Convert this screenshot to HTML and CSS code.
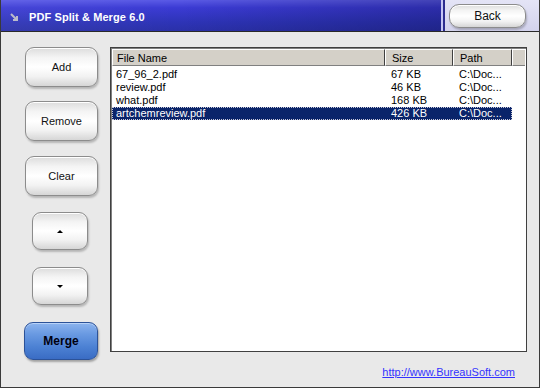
FILE: index.html
```html
<!DOCTYPE html>
<html lang="en">
<head>
    <meta charset="UTF-8">
    <title>PDF Split &amp; Merge 6.0</title>
    <link rel="stylesheet" href="styles.css">
</head>
<body>
    <div class="window">
        <div class="titlebar">
            <div class="caption">
                <svg class="app-icon" width="9" height="9" viewBox="0 0 9 9">
                    <path d="M1 1 L7 7 M7 3 L7 7 L3 7" stroke="#b8b8c8" stroke-width="2" fill="none"/>
                </svg>
                <span class="caption-text">PDF Split &amp; Merge 6.0</span>
            </div>
            <div class="back-area">
                <button class="btn back-btn">Back</button>
            </div>
        </div>

        <div class="main">
            <div class="sidebar">
                <button class="btn side-btn">Add</button>
                <button class="btn side-btn">Remove</button>
                <button class="btn side-btn">Clear</button>
                <button class="btn arrow-btn btn-up"><span class="tri-up"></span></button>
                <button class="btn arrow-btn btn-down"><span class="tri-down"></span></button>
                <button class="btn merge-btn">Merge</button>
            </div>

            <div class="filelist">
                <div class="list-head">
                    <div class="col col-name">File Name</div>
                    <div class="col col-size">Size</div>
                    <div class="col col-path">Path</div>
                    <div class="col col-rest"></div>
                </div>
                <div class="list-body">
                    <div class="row">
                        <div class="cell col-name">67_96_2.pdf</div>
                        <div class="cell col-size">67 KB</div>
                        <div class="cell col-path">C:\Doc...</div>
                    </div>
                    <div class="row">
                        <div class="cell col-name">review.pdf</div>
                        <div class="cell col-size">46 KB</div>
                        <div class="cell col-path">C:\Doc...</div>
                    </div>
                    <div class="row">
                        <div class="cell col-name">what.pdf</div>
                        <div class="cell col-size">168 KB</div>
                        <div class="cell col-path">C:\Doc...</div>
                    </div>
                    <div class="row selected">
                        <div class="cell col-name">artchemreview.pdf</div>
                        <div class="cell col-size">426 KB</div>
                        <div class="cell col-path">C:\Doc...</div>
                    </div>
                </div>
            </div>
        </div>

        <div class="footer">
            <a href="#" class="site-link">http://www.BureauSoft.com</a>
        </div>
    </div>
</body>
</html>
```

FILE: styles.css
```css
/* Ventana principal */
body {
    margin: 0;
    font-family: "Liberation Sans", Arial, sans-serif;
    background-color: #e9e9e9;
}

.window {
    width: 540px;
    height: 388px;
    box-sizing: border-box;
    background-color: #e9e9e9;
    border-left: 1px solid #3a3a3a;
    border-right: 1px solid #3a3a3a;
    border-bottom: 1px solid #3a3a3a;
    display: flex;
    flex-direction: column;
}

/* Barra de título */
.titlebar {
    display: flex;
    height: 31px;
    border-bottom: 1px solid #2a2a2a;
}

.caption {
    flex: 1;
    display: flex;
    align-items: center;
    padding-left: 9px;
    padding-top: 3px;
    background: linear-gradient(180deg, #5a5ae6 0%, #3b3bd4 25%, #2e34b8 70%, #2a30a8 100%);
    position: relative;
}

.caption::after {
    content: "";
    position: absolute;
    inset: 0;
    background: linear-gradient(90deg, rgba(255, 255, 255, 0.05) 0%, rgba(0, 0, 0, 0) 40%, rgba(0, 0, 40, 0.25) 100%);
}

.app-icon {
    margin-right: 10px;
}

.caption-text {
    color: #ffffff;
    font-weight: bold;
    font-size: 11px;
    letter-spacing: 0.1px;
}

.back-area {
    width: 90px;
    border-left: 2px solid #c4c4f4;
    box-shadow: inset 2px 0 0 #2c2c90;
    background: linear-gradient(180deg, #e4e4f6, #d2d2ec);
    display: flex;
    align-items: center;
    padding-left: 6px;
    padding-top: 1px;
}

/* Botones */
.btn {
    font-family: "Liberation Sans", Arial, sans-serif;
    font-size: 11px;
    color: #111;
    border: 1px solid #8c8c8c;
    border-radius: 9px;
    background: linear-gradient(180deg, #dcdcdc 0%, #f4f4f4 25%, #ffffff 50%, #f2f2f2 75%, #d6d6d6 100%);
    box-shadow: 1px 2px 2px rgba(0, 0, 0, 0.22), inset 0 1px 0 #ffffff;
    padding: 0;
    cursor: pointer;
}

.back-btn {
    width: 77px;
    height: 24px;
    font-size: 12px;
    border-radius: 10px;
}

.main {
    display: flex;
    padding-top: 15px;
}

.sidebar {
    width: 109px;
    display: flex;
    flex-direction: column;
    align-items: flex-start;
    padding-left: 24px;
    box-sizing: border-box;
}

.side-btn {
    width: 73px;
    height: 40px;
    margin-bottom: 14px;
}

.side-btn:nth-child(2) {
    margin-bottom: 15px;
}

.arrow-btn {
    width: 56px;
    height: 38px;
    margin-left: 7px;
    margin-bottom: 17px;
    display: flex;
    align-items: center;
    justify-content: center;
}

.btn-up {
    margin-top: 2px;
}

.tri-up {
    width: 0;
    height: 0;
    border-left: 3px solid transparent;
    border-right: 3px solid transparent;
    border-bottom: 3px solid #000;
}

.tri-down {
    width: 0;
    height: 0;
    border-left: 3px solid transparent;
    border-right: 3px solid transparent;
    border-top: 3px solid #000;
}

.merge-btn {
    width: 74px;
    height: 38px;
    margin-left: -1px;
    font-size: 12px;
    font-weight: bold;
    color: #000010;
    border: 1px solid #2c5298;
    background: linear-gradient(180deg, #8cb4ee 0%, #6a9ae2 30%, #4d82d4 65%, #3a6cc4 100%);
    box-shadow: 1px 2px 2px rgba(0, 0, 0, 0.3), inset 0 1px 0 #b8d2f8;
}

/* Lista de archivos */
.filelist {
    width: 417px;
    height: 305px;
    box-sizing: border-box;
    background-color: #ffffff;
    border: 1px solid #404040;
    box-shadow: inset 1px 1px 0 #808080;
    padding: 1px 0 0 1px;
    font-size: 11px;
}

.list-head {
    display: flex;
    height: 17px;
    margin-bottom: 2px;
}

.col {
    box-sizing: border-box;
    background-color: #d4d0c8;
    border-top: 1px solid #ffffff;
    border-left: 1px solid #ffffff;
    border-right: 1px solid #404040;
    border-bottom: 1px solid #808080;
    padding: 2px 0 0 4px;
    color: #000;
}

.list-head .col-name { width: 273px; }
.list-head .col-size { width: 68px; padding-left: 6px; }
.list-head .col-path { width: 59px; padding-left: 6px; }
.list-head .col-rest { width: 13px; border-right: none; }

.row {
    display: flex;
    height: 13px;
    line-height: 13px;
    width: 400px;
    box-sizing: border-box;
    color: #000;
}

.cell {
    white-space: nowrap;
    overflow: hidden;
}

.row .col-name { width: 273px; padding-left: 4px; box-sizing: border-box; }
.row .col-size { width: 68px; padding-left: 6px; box-sizing: border-box; }
.row .col-path { width: 59px; padding-left: 6px; box-sizing: border-box; }

.row.selected {
    background-color: #0a246a;
    color: #ffffff;
    outline: 1px dotted #c8c8d8;
    outline-offset: -1px;
}

/* Pie con enlace */
.footer {
    flex: 1;
    display: flex;
    justify-content: flex-end;
    align-items: center;
    padding-right: 24px;
    padding-bottom: 3px;
}

.site-link {
    font-size: 11px;
    color: #3333ff;
    text-decoration: underline;
}
```
